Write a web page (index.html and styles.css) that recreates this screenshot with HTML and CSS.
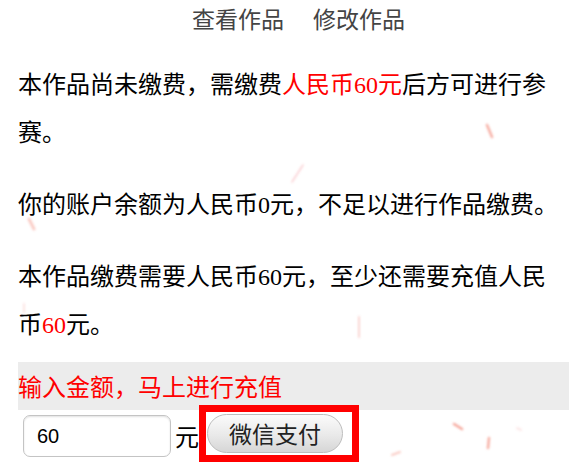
FILE: index.html
```html
<!DOCTYPE html>
<html lang="zh-CN">
<head>
<meta charset="utf-8">
<title>作品缴费</title>
<link rel="stylesheet" href="styles.css">
</head>
<body>
<div class="page">
  <nav class="nav">
    <a class="nav-link" href="#">查看作品</a>
    <a class="nav-link" href="#">修改作品</a>
  </nav>
  <div class="content">
    <p>本作品尚未缴费，需缴费<span class="red">人民币60元</span>后方可进行参赛。</p>
    <p>你的账户余额为人民币0元，不足以进行作品缴费。</p>
    <p>本作品缴费需要人民币60元，至少还需要充值人民币<span class="red">60</span>元。</p>
    <div class="bar">输入金额，马上进行充值</div>
    <form class="pay-row" onsubmit="return false;">
      <input class="amount" type="text" value="60">
      <span class="unit">元</span>
      <span class="highlight"><button class="pay-btn" type="button">微信支付</button></span>
    </form>
  </div>
  <svg class="petals" width="569" height="468" viewBox="0 0 569 468" aria-hidden="true">
    <defs>
      <filter id="soft" x="-50%" y="-50%" width="200%" height="200%">
        <feGaussianBlur stdDeviation="0.8"/>
      </filter>
    </defs>
    <g filter="url(#soft)" stroke-linecap="round" fill="none">
      <line x1="487" y1="125" x2="492" y2="137" stroke="rgba(240,110,90,0.55)" stroke-width="2.5"/>
      <line x1="292" y1="182" x2="303" y2="165" stroke="rgba(240,120,130,0.35)" stroke-width="1.5"/>
      <line x1="29" y1="219" x2="34" y2="229" stroke="rgba(240,110,90,0.35)" stroke-width="3"/>
      <line x1="24" y1="304" x2="24" y2="312" stroke="rgba(240,120,110,0.2)" stroke-width="2"/>
      <line x1="359" y1="317" x2="359" y2="337" stroke="rgba(240,120,110,0.3)" stroke-width="2"/>
      <line x1="454" y1="424" x2="462" y2="429" stroke="rgba(240,110,90,0.6)" stroke-width="2.5"/>
      <line x1="489" y1="438" x2="488" y2="448" stroke="rgba(240,110,90,0.55)" stroke-width="2.5"/>
      <line x1="392" y1="455" x2="400" y2="452" stroke="rgba(240,110,90,0.35)" stroke-width="2"/>
      <line x1="517" y1="428" x2="521" y2="430" stroke="rgba(240,140,140,0.2)" stroke-width="2"/>
    </g>
  </svg>
</div>
</body>
</html>
```

FILE: styles.css
```css
html, body {
  margin: 0;
  padding: 0;
  background: #fff;
}

.page {
  position: relative;
  width: 569px;
  min-height: 468px;
  overflow: hidden;
}

.nav {
  height: 37px;
  display: flex;
  align-items: center;
  padding-left: 192px;
  gap: 29px;
  font-family: "Noto Sans CJK SC", "Noto Sans", sans-serif;
  font-size: 23px;
  line-height: 37px;
}

.nav-link {
  color: #444;
  text-decoration: none;
}

.content {
  padding-left: 18px;
  padding-top: 24px;
  font-family: "Liberation Serif", "Noto Sans CJK SC", serif;
  font-size: 24px;
  line-height: 48px;
  color: #000;
}

.content p {
  margin: 0 0 24px;
}

.content p:last-of-type {
  margin-bottom: 13px;
}

.red {
  color: #f00;
}

.bar {
  height: 48px;
  line-height: 48px;
  background: #ececec;
  color: #f00;
  font-family: "Noto Sans CJK SC", sans-serif;
}

.pay-row {
  margin: 0;
  display: flex;
  align-items: center;
  padding-left: 5px;
  height: 52px;
}

.amount {
  box-sizing: border-box;
  width: 148px;
  height: 42px;
  margin: 0;
  padding: 0 0 0 13px;
  border: 1px solid #c4c4c4;
  border-radius: 7px;
  box-shadow: inset 0 1px 2px rgba(0, 0, 0, 0.12);
  font-family: "Liberation Sans", Arial, sans-serif;
  font-size: 20px;
  color: #000;
  background: #fff;
  outline: none;
}

.unit {
  margin-left: 4px;
  font-family: "Noto Sans CJK SC", sans-serif;
  font-size: 24px;
  line-height: 24px;
}

.highlight {
  display: block;
  box-sizing: border-box;
  margin-top: -5px;
  width: 160px;
  padding: 2px 9px 2px 1px;
  border: 7px solid #f00;
  line-height: 0;
}

.pay-btn {
  box-sizing: border-box;
  width: 136px;
  height: 39px;
  margin: 0;
  padding: 0;
  border: 1px solid #bdbdbd;
  border-radius: 20px;
  background: linear-gradient(#fbfbfb, #e9e9e9 55%, #d6d6d6);
  font-family: "Noto Sans CJK SC", sans-serif;
  font-size: 23px;
  line-height: 37px;
  color: #222;
}

.petals {
  position: absolute;
  left: 0;
  top: 0;
  pointer-events: none;
}
```
